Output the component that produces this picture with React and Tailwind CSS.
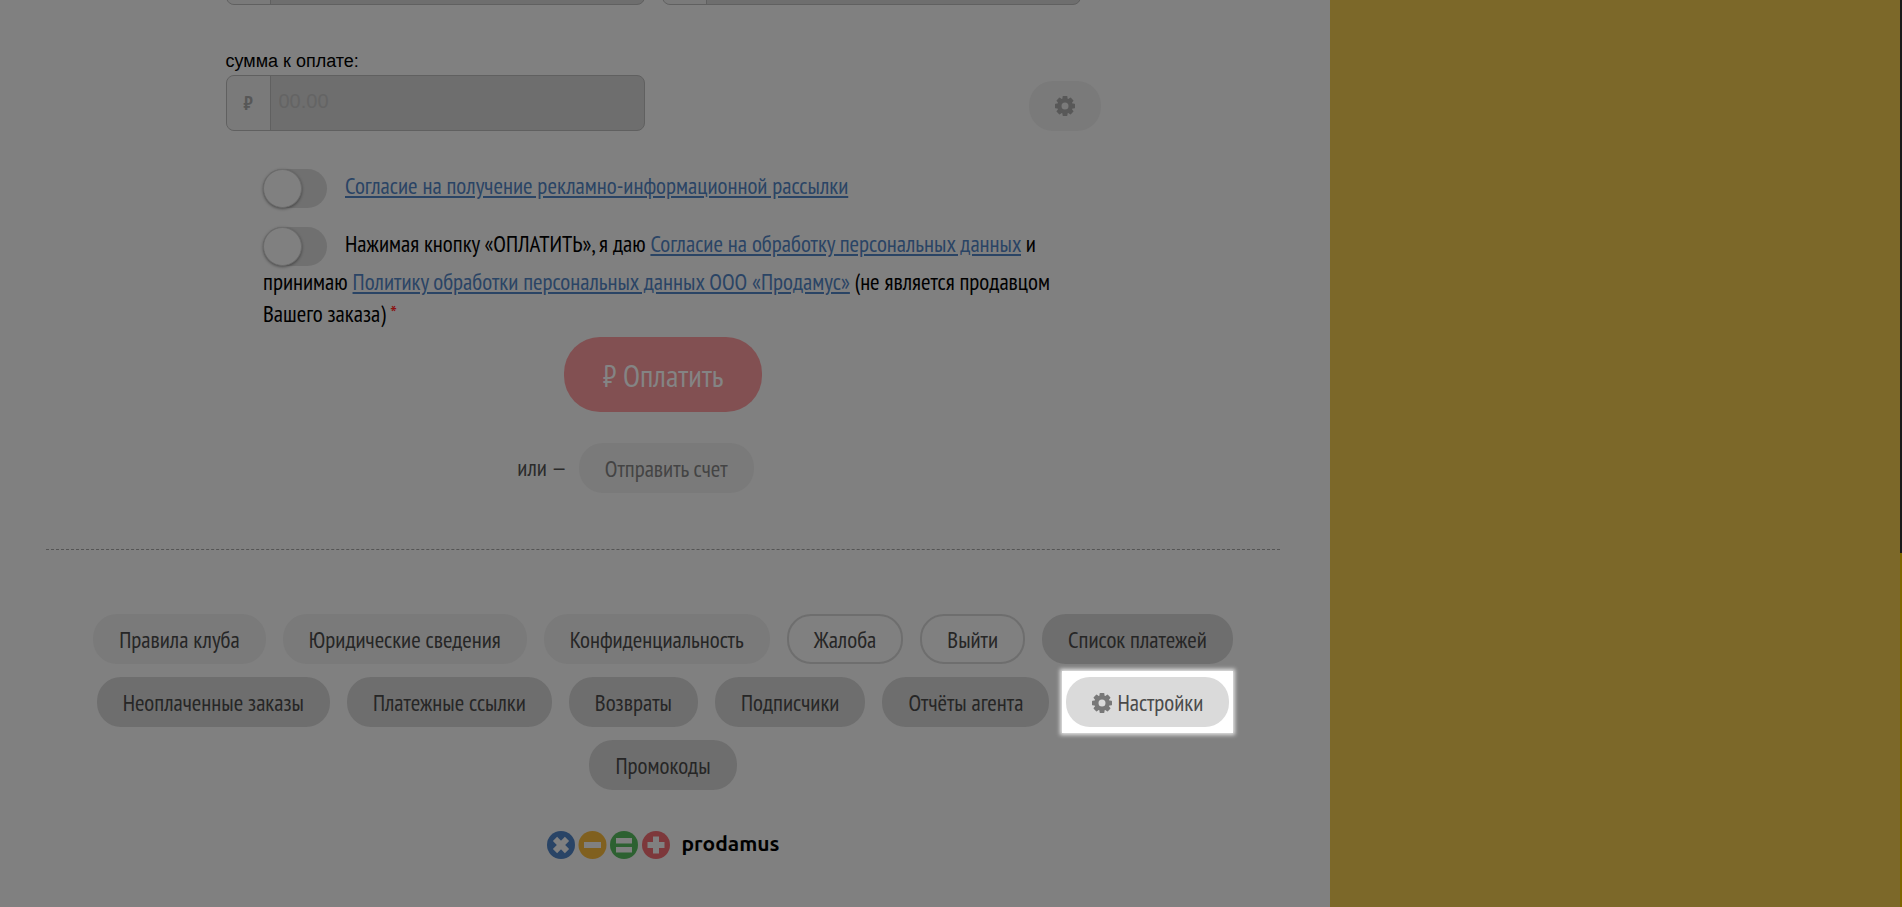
const TEETH = [0, 45, 90, 135, 180, 225, 270, 315];

function GearIcon({ className = "" }) {
  return (
    <svg viewBox="0 0 20 20" className={className} aria-hidden="true">
      {TEETH.map((angle) => (
        <path
          key={angle}
          d="M7 5 L7.7 0.5 Q7.8 0 8.3 0 H11.7 Q12.2 0 12.3 0.5 L13 5 Z"
          fill="currentColor"
          transform={`rotate(${angle} 10 10)`}
        />
      ))}
      <path
        fillRule="evenodd"
        fill="currentColor"
        d="M10 2.4 a7.6 7.6 0 1 0 0 15.2 a7.6 7.6 0 1 0 0 -15.2 Z M10 6.5 a3.5 3.5 0 1 1 0 7 a3.5 3.5 0 1 1 0 -7 Z"
      />
    </svg>
  );
}

function MoneyField({ id, label, placeholder, symbol }) {
  return (
    <div className="flex h-14 w-[419px] overflow-hidden rounded-lg border border-[#606060] bg-[#6e6e6e]">
      <span className="flex w-11 shrink-0 items-center justify-center border-r border-[#606060] bg-[#7a7a7a] font-['PT_Sans_Narrow',sans-serif] text-[20px] font-bold text-[#575757]">
        {symbol}
      </span>
      <input
        id={id}
        aria-label={label}
        placeholder={placeholder}
        className="min-w-0 flex-1 bg-transparent px-2 pb-1 font-['Liberation_Sans',sans-serif] text-[20px] text-[#333] outline-none placeholder:text-[#646464]"
      />
    </div>
  );
}

function Toggle({ id }) {
  return (
    <input
      id={id}
      type="checkbox"
      role="switch"
      className="mr-[18px] inline-block h-[39px] w-16 appearance-none rounded-full bg-[#707070] align-middle before:block before:size-[39px] before:rounded-full before:border before:border-[#6c6c6c] before:bg-[#808080] before:shadow-[0_1px_3px_rgba(0,0,0,0.4)]"
    />
  );
}

function TextLink({ children }) {
  return (
    <a href="#" className="text-[#2a4465] underline">
      {children}
    </a>
  );
}

const PILL = "h-[50px] whitespace-nowrap rounded-[24px] pt-0.5 text-[23px] text-[#262626]";
const TONES = {
  light: "bg-[#7a7a7a] px-[26px]",
  dark: "bg-[#6e6e6e] px-[26px]",
  outline: "border-2 border-[#6e6e6e] px-[25px]",
};

const LINKS = [
  ["Правила клуба", "light"],
  ["Юридические сведения", "light"],
  ["Конфиденциальность", "light"],
  ["Жалоба", "outline"],
  ["Выйти", "outline"],
  ["Список платежей", "dark"],
  ["Неоплаченные заказы", "dark"],
  ["Платежные ссылки", "dark"],
  ["Возвраты", "dark"],
  ["Подписчики", "dark"],
  ["Отчёты агента", "dark"],
  ["Настройки", "active"],
  ["Промокоды", "dark"],
];

function FooterButton({ label, tone }) {
  if (tone === "active") {
    return (
      <div className="relative">
        <span className="absolute -inset-x-1 -inset-y-1.5 bg-white shadow-[0_0_4px_2px_#ffffffcc]" />
        <button className="relative flex h-[50px] items-center gap-[5px] whitespace-nowrap rounded-[24px] bg-[#dadada] px-[26px] pt-0.5 text-[23px] text-[#4a4a4a]">
          <GearIcon className="size-5 text-[#787878]" />
          {label}
        </button>
      </div>
    );
  }
  return <button className={`${PILL} ${TONES[tone]}`}>{label}</button>;
}

function Logo() {
  return (
    <a href="#" className="flex items-center gap-3 text-black">
      <svg viewBox="0 0 123 28" className="h-7 w-[123px]" aria-hidden="true">
        <circle cx="14" cy="14" r="14" fill="#294466" />
        <circle cx="45.5" cy="14" r="14" fill="#80601f" />
        <circle cx="77" cy="14" r="14" fill="#2d6131" />
        <circle cx="109" cy="14" r="14" fill="#7d383b" />
        <g fill="#808080">
          <g transform="rotate(45 14 14)">
            <rect x="5.5" y="11" width="17" height="6" />
            <rect x="11" y="5.5" width="6" height="17" />
          </g>
          <rect x="37" y="11" width="17" height="6" />
          <rect x="69" y="7" width="16" height="5.5" />
          <rect x="69" y="16" width="16" height="5.5" />
          <rect x="100.5" y="11" width="17" height="6" />
          <rect x="106" y="5.5" width="6" height="17" />
        </g>
      </svg>
      <span className="pb-1 font-['Ubuntu','Noto_Sans',sans-serif] text-[21px] leading-7 font-bold">prodamus</span>
    </a>
  );
}

export default function App() {
  return (
    <div className="flex min-h-screen overflow-hidden bg-[#7c6829] font-['PT_Sans_Narrow',sans-serif]">
      <div className="flex-1">
        <main className="flow-root min-h-screen w-[70%] bg-[#808080] pr-[50px] pl-[46px]">
          <div className="mx-auto max-w-[875px]">
            <div className="-mt-[51px] flex gap-[17px]">
              <MoneyField id="price" label="цена" />
              <MoneyField id="total" label="итого" />
            </div>
            <div className="mt-11 flex items-end justify-between">
              <div>
                <label
                  htmlFor="amount"
                  className="block pb-0.5 font-['Liberation_Sans',sans-serif] text-[18px] leading-6"
                >
                  сумма к оплате:
                </label>
                <MoneyField id="amount" label="сумма к оплате" placeholder="00.00" symbol="₽" />
              </div>
              <button
                aria-label="Настроить"
                className="flex h-[50px] w-[72px] items-center justify-center rounded-[24px] bg-[#7a7a7a] text-[#585858]"
              >
                <GearIcon className="size-5" />
              </button>
            </div>
          </div>

          <div className="mx-auto mt-[38px] max-w-[800px] text-[23px] leading-8">
            <p className="mb-[19px]">
              <Toggle id="mailing" />
              <label htmlFor="mailing">
                <TextLink>Согласие на получение рекламно-информационной рассылки</TextLink>
              </label>
            </p>
            <p>
              <Toggle id="terms" />
              <label htmlFor="terms">
                Нажимая кнопку «ОПЛАТИТЬ», я даю <TextLink>Согласие на обработку персональных данных</TextLink> и
                принимаю <TextLink>Политику обработки персональных данных ООО «Продамус»</TextLink> (не является
                продавцом Вашего заказа) <span className="text-[#8b1010]">*</span>
              </label>
            </p>
          </div>

          <div className="mt-[7px] flex flex-col items-center">
            <button className="h-[75px] rounded-[36px] bg-[#825052] px-[38px] pt-1 text-[31px] text-[#848484]">
              ₽ Оплатить
            </button>
            <div className="mt-[31px] mr-[55px] flex items-center gap-3 text-[23px]">
              <span className="text-[#2b2b2b]">или —</span>
              <button className="h-[50px] rounded-[24px] bg-[#7a7a7a] px-[26px] pt-0.5 text-[#444]">
                Отправить счет
              </button>
            </div>
          </div>

          <footer className="mt-14 border-t border-dashed border-[#555] pt-16">
            <nav className="flex flex-wrap justify-center gap-x-[17px] gap-y-[13px]">
              {LINKS.map(([label, tone]) => (
                <FooterButton key={label} label={label} tone={tone} />
              ))}
            </nav>
            <div className="mt-[39px] flex justify-center">
              <Logo />
            </div>
          </footer>
        </main>
      </div>
      <div className="flex w-0.5 flex-col bg-[#7e6500]">
        <div className="h-[61%] bg-[#1a1a1a]" />
      </div>
    </div>
  );
}
